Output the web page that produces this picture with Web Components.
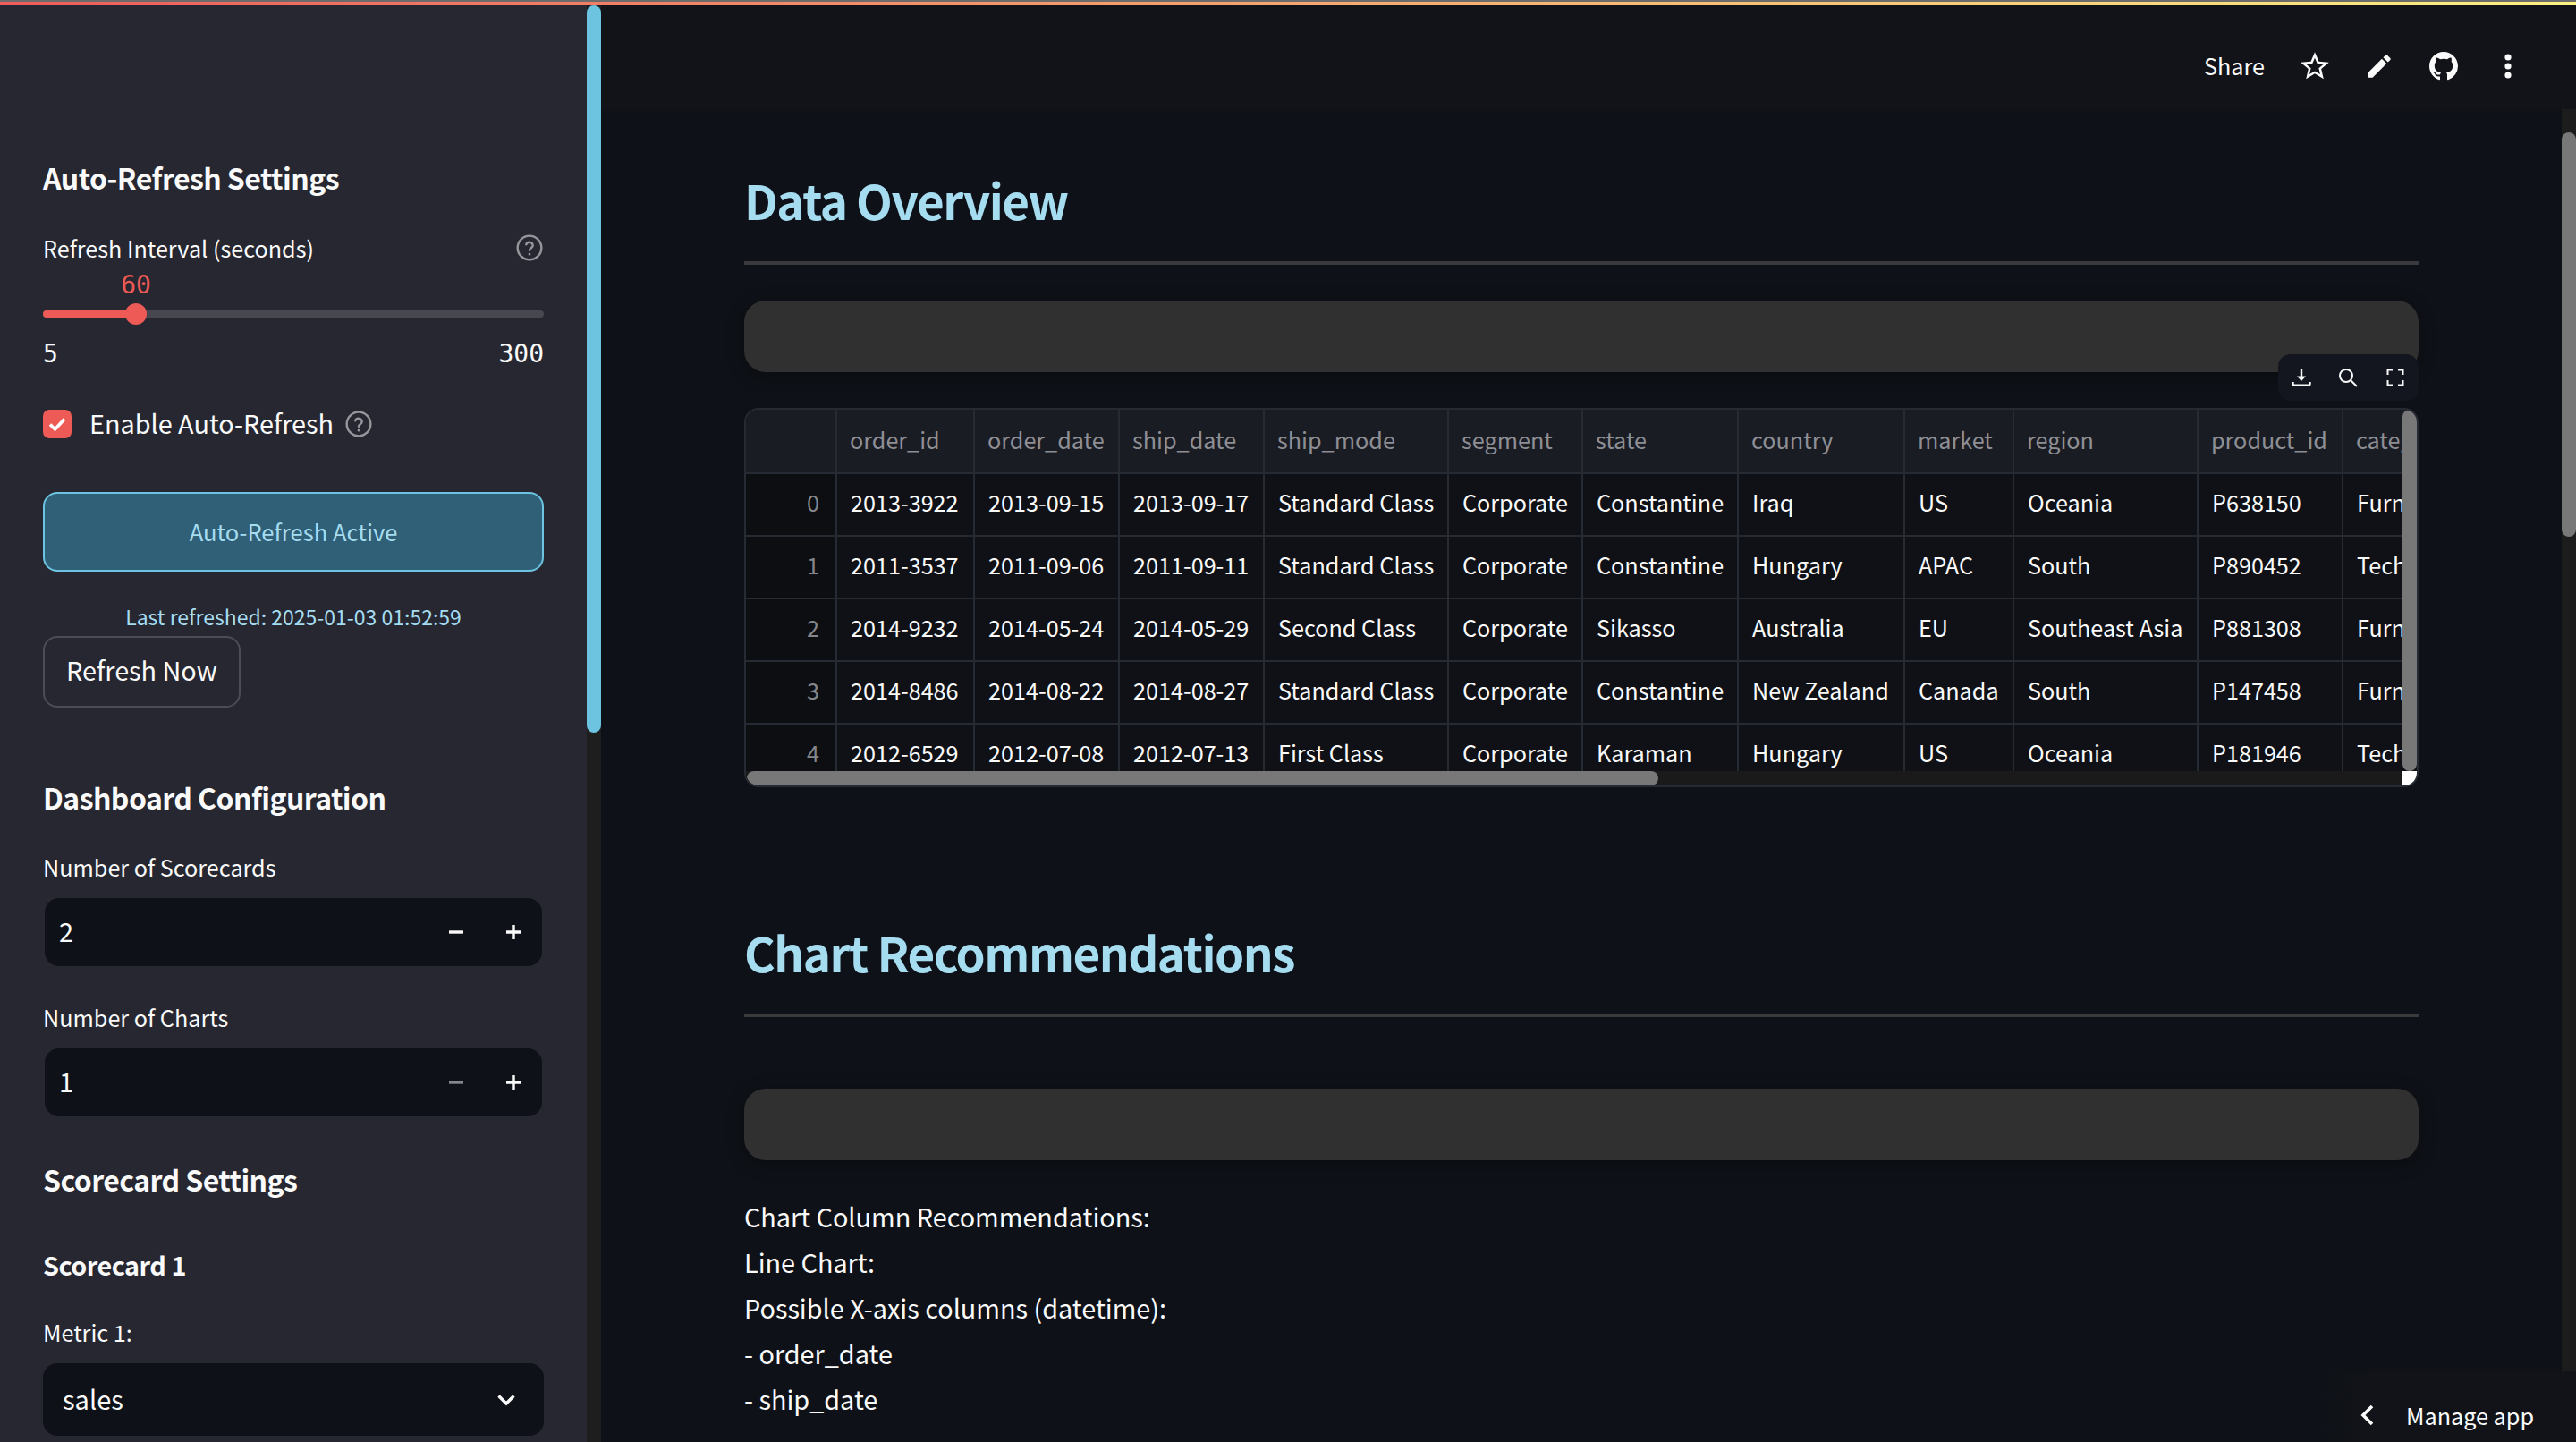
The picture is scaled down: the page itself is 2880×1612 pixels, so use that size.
<!DOCTYPE html>
<html>
<head>
<meta charset="utf-8">
<title>Dashboard</title>
<style>
  html, body { margin: 0; height: 100%; background: #0e1117; }
  body { font-family: "Noto Sans CJK SC", sans-serif; color: #fafafa; overflow: hidden; }
</style>
</head>
<body>
<app-shell>
  <side-bar slot="side">
    <side-heading style="margin-top:167px">Auto-Refresh Settings</side-heading>
    <field-label style="margin-top:34px" help>Refresh Interval (seconds)</field-label>
    <range-slider style="margin-top:-2px" value="60" min="5" max="300"></range-slider>
    <check-row style="margin-top:42px">Enable Auto-Refresh</check-row>
    <status-button style="margin-top:60px">Auto-Refresh Active</status-button>
    <refresh-note style="margin-top:32px">Last refreshed: 2025-01-03 01:52:59</refresh-note>
    <plain-button style="margin-top:4px">Refresh Now</plain-button>
    <side-heading style="margin-top:75px">Dashboard Configuration</side-heading>
    <field-label style="margin-top:33px">Number of Scorecards</field-label>
    <number-input style="margin-top:15px" value="2"></number-input>
    <field-label style="margin-top:37px">Number of Charts</field-label>
    <number-input style="margin-top:15px" value="1" at-min></number-input>
    <side-heading style="margin-top:45px">Scorecard Settings</side-heading>
    <side-subheading style="margin-top:49px">Scorecard 1</side-subheading>
    <field-label style="margin-top:33px">Metric 1:</field-label>
    <select-box style="margin-top:15px">sales</select-box>
  </side-bar>

  <top-header slot="header"></top-header>

  <section-title style="margin-top:61px">Data Overview</section-title>
  <blank-bar style="margin-top:40px"></blank-bar>
  <data-table style="margin-top:40px"></data-table>

  <section-title style="margin-top:144px">Chart Recommendations</section-title>
  <blank-bar style="margin-top:80px"></blank-bar>
  <text-lines style="margin-top:37px">
    <div>Chart Column Recommendations:</div>
    <div>Line Chart:</div>
    <div>Possible X-axis columns (datetime):</div>
    <div>- order_date</div>
    <div>- ship_date</div>
  </text-lines>

  <manage-app slot="overlay"></manage-app>
</app-shell>

<script>
// small helper, every element gets the same open shadow root + template
function define(name, markup, setup) {
  const template = document.createElement('template');
  template.innerHTML = markup;
  customElements.define(name, class extends HTMLElement {
    constructor() {
      super();
      this.attachShadow({ mode: 'open' });
      this.shadowRoot.appendChild(template.content.cloneNode(true));
    }
    connectedCallback() {
      if (setup) setup(this, this.shadowRoot);
    }
  });
}

const helpIcon = `<svg style="display:block" width="32" height="32" viewBox="0 0 24 24" fill="none" stroke="#96979c" stroke-width="1.8" stroke-linecap="round">
  <circle cx="12" cy="12" r="10"/><path d="M9.2 9.2a2.9 2.9 0 0 1 5.6 .9c0 1.9-2.8 2.2-2.8 4"/><path d="M12 17.3v.1" stroke-width="2"/></svg>`;

define('app-shell', `
  <style>
    :host { display: flex; flex-direction: column; height: 100vh; overflow: hidden; position: relative; }
    .bar { flex: none; height: 4px; border-top: 2px solid #6c6c6c; background: linear-gradient(90deg, #ee5c5c, #fdf182); }
    .body { flex: 1; display: flex; min-height: 0; }
    main { flex: 1; min-width: 0; position: relative; display: flex; flex-direction: column; overflow: hidden; }
    .content { flex: 1; min-height: 0; overflow: hidden; padding: 0 176px 0 160px; display: flex; flex-direction: column; }
    .track { position: absolute; right: 0; top: 116px; bottom: 74px; width: 16px; background: #1c1c1c; }
    .thumb { position: absolute; top: 26px; left: 0; width: 16px; height: 452px; background: #787878; border-radius: 8px; }
  </style>
  <div class="bar"></div>
  <div class="body">
    <slot name="side"></slot>
    <main>
      <slot name="header"></slot>
      <div class="content"><slot></slot></div>
      <div class="track"><div class="thumb"></div></div>
      <slot name="overlay"></slot>
    </main>
  </div>
`);

define('side-bar', `
  <style>
    :host { display: block; flex: none; width: 672px; box-sizing: border-box; background: #262730; position: relative; overflow: hidden; }
    .col { display: flex; flex-direction: column; padding: 0 64px 0 48px; }
    .track { position: absolute; top: 0; right: 0; bottom: 0; width: 16px; background: #1e1e1e; }
    .thumb { width: 16px; height: 813px; background: #6cc4e0; border-radius: 8px; }
  </style>
  <div class="col"><slot></slot></div>
  <div class="track"><div class="thumb"></div></div>
`);

define('side-heading', `
  <style>:host { display: block; font-size: 32px; letter-spacing: -.56px; font-weight: 700; line-height: 50px; white-space: nowrap; }</style>
  <slot></slot>
`);

define('side-subheading', `
  <style>:host { display: block; font-size: 28.8px; letter-spacing: -.5px; font-weight: 700; line-height: 44px; white-space: nowrap; }</style>
  <slot></slot>
`);

define('field-label', `
  <style>
    :host { display: flex; justify-content: space-between; align-items: center; font-size: 25.2px; line-height: 40px; height: 40px; white-space: nowrap; }
    .help { display: none; }
    :host([help]) .help { display: block; }
  </style>
  <span><slot></slot></span>
  <span class="help">${helpIcon}</span>
`);

define('range-slider', `
  <style>
    :host { display: block; position: relative; padding-top: 52px; }
    .track { height: 8px; border-radius: 4px; background: #47484f; }
    .fill { height: 8px; border-radius: 4px; background: #ee5a55; }
    .knob { position: absolute; top: 44px; width: 24px; height: 24px; margin-left: -12px; border-radius: 50%; background: #ee5a55; }
    .val { position: absolute; top: 9px; transform: translateX(-50%); font: 28px/30px "DejaVu Sans Mono", monospace; color: #ee5a55; }
    .ends { display: flex; justify-content: space-between; margin-top: 21px; font: 28px/40px "DejaVu Sans Mono", monospace; }
  </style>
  <div class="val"></div>
  <div class="track"><div class="fill"></div></div>
  <div class="knob"></div>
  <div class="ends"><span class="min"></span><span class="max"></span></div>
`, (el, root) => {
  // thumb sits at x=152 for 60 on the 560px track, same pos as the real widget
  const left = '104px';
  root.querySelector('.val').textContent = el.getAttribute('value');
  root.querySelector('.val').style.left = left;
  root.querySelector('.knob').style.left = left;
  root.querySelector('.fill').style.width = left;
  root.querySelector('.min').textContent = el.getAttribute('min');
  root.querySelector('.max').textContent = el.getAttribute('max');
});

define('check-row', `
  <style>
    :host { display: flex; align-items: center; height: 32px; font-size: 28.8px; white-space: nowrap; }
    .box { flex: none; width: 32px; height: 32px; border-radius: 7px; background: #ee5a55; display: flex; align-items: center; justify-content: center; margin-right: 20px; }
    .txt { padding-bottom: 4px; }
    .help { margin-left: 12px; }
  </style>
  <span class="box"><svg width="24" height="24" viewBox="0 0 24 24" fill="none" stroke="#fff" stroke-width="3.6"><path d="M4 12.5l5.5 5.5L20 6.5"/></svg></span>
  <span class="txt"><slot></slot></span>
  <span class="help">${helpIcon}</span>
`);

define('status-button', `
  <style>
    :host { display: flex; align-items: center; justify-content: center; height: 89px; box-sizing: border-box; padding-bottom: 2px; background: #2f6078; border: 2px solid #6cc4e0; border-radius: 16px; color: #a5dcf0; font-size: 25.6px; }
  </style>
  <slot></slot>
`);

define('refresh-note', `
  <style>:host { display: block; text-align: center; color: #a5dcf0; font-size: 23px; line-height: 36px; white-space: nowrap; }</style>
  <slot></slot>
`);

define('plain-button', `
  <style>
    :host { display: flex; align-self: flex-start; align-items: center; height: 80px; box-sizing: border-box; padding: 0 24px 5px; border: 2px solid #4b4c56; border-radius: 16px; font-size: 28.8px; white-space: nowrap; }
  </style>
  <slot></slot>
`);

define('number-input', `
  <style>
    :host { display: flex; align-items: center; height: 76px; margin: 0 2px; background: #0e1117; border-radius: 16px; font-size: 29px; padding-left: 16px; }
    .val { flex: 1; padding-bottom: 4px; }
    .step { display: flex; width: 64px; justify-content: center; }
    :host([at-min]) .minus { stroke: #85868e; }
    svg { stroke: #fafafa; }
  </style>
  <span class="val"></span>
  <span class="step"><svg class="minus" width="18" height="18" viewBox="0 0 18 18" stroke-width="3.4"><path d="M1 9h16"/></svg></span>
  <span class="step"><svg width="18" height="18" viewBox="0 0 18 18" stroke-width="3.4"><path d="M1 9h16M9 1v16"/></svg></span>
`, (el, root) => {
  root.querySelector('.val').textContent = el.getAttribute('value');
});

define('select-box', `
  <style>
    :host { display: flex; align-items: center; justify-content: space-between; height: 81px; background: #0e1117; border-radius: 16px; font-size: 29px; padding: 0 32px 0 22px; }
    span { padding-bottom: 4px; }
  </style>
  <span><slot></slot></span>
  <svg width="20" height="14" viewBox="0 0 20 14" fill="none" stroke="#fafafa" stroke-width="3.4"><path d="M1.5 2.5L10 11l8.5-8.5"/></svg>
`);

define('top-header', `
  <style>
    :host { display: flex; flex: none; align-items: center; justify-content: flex-end; height: 116px; background: #111318; padding: 20px 40px 0 0; box-sizing: border-box; }
    .share { font-size: 25.2px; margin-right: 20px; padding-bottom: 2px; }
    .cell { width: 72px; display: flex; justify-content: center; }
    svg { fill: #fafafa; display: block; }
  </style>
  <span class="share">Share</span>
  <span class="cell"><svg width="38" height="38" viewBox="0 0 24 24"><path d="M22 9.24l-7.19-.62L12 2 9.19 8.63 2 9.24l5.46 4.73L5.82 21 12 17.27 18.18 21l-1.63-7.03L22 9.24zM12 15.4l-3.76 2.27 1-4.28-3.32-2.88 4.38-.38L12 6.1l1.71 4.04 4.38.38-3.32 2.88 1 4.28L12 15.4z"/></svg></span>
  <span class="cell"><svg width="34" height="34" viewBox="0 0 24 24"><path d="M3 17.25V21h3.75L17.81 9.94l-3.75-3.75L3 17.25zM20.71 7.04c.39-.39.39-1.02 0-1.41l-2.34-2.34c-.39-.39-1.02-.39-1.41 0l-1.83 1.83 3.75 3.75 1.83-1.83z"/></svg></span>
  <span class="cell"><svg width="32" height="32" viewBox="0 0 16 16"><path d="M8 0C3.58 0 0 3.58 0 8c0 3.54 2.29 6.53 5.47 7.59.4.07.55-.17.55-.38 0-.19-.01-.82-.01-1.49-2.01.37-2.53-.49-2.69-.94-.09-.23-.48-.94-.82-1.13-.28-.15-.68-.52-.01-.53.63-.01 1.08.58 1.23.82.72 1.21 1.87.87 2.33.66.07-.52.28-.87.51-1.07-1.78-.2-3.64-.89-3.64-3.95 0-.87.31-1.59.82-2.15-.08-.2-.36-1.02.08-2.12 0 0 .67-.21 2.2.82.64-.18 1.32-.27 2-.27.68 0 1.36.09 2 .27 1.53-1.04 2.2-.82 2.2-.82.44 1.1.16 1.92.08 2.12.51.56.82 1.27.82 2.15 0 3.07-1.87 3.75-3.65 3.95.29.25.54.73.54 1.48 0 1.07-.01 1.93-.01 2.2 0 .21.15.46.55.38A8.013 8.013 0 0016 8c0-4.42-3.58-8-8-8z"/></svg></span>
  <span class="cell"><svg width="8" height="28" viewBox="0 0 8 28"><circle cx="4" cy="4" r="3.6"/><circle cx="4" cy="14" r="3.6"/><circle cx="4" cy="24" r="3.6"/></svg></span>
`);

define('section-title', `
  <style>
    :host { display: block; flex: none; }
    h2 { margin: 0; font-size: 53px; letter-spacing: -1.5px; line-height: 80px; font-weight: 700; color: #a5dcf0; white-space: nowrap; }
    .rule { height: 4px; margin-top: 29px; background: #3a3a3d; }
  </style>
  <h2><slot></slot></h2>
  <div class="rule"></div>
`);

define('blank-bar', `
  <style>
    :host { display: block; flex: none; height: 80px; border-radius: 24px; background: #303030; box-shadow: 0 4px 20px rgba(0,0,0,.3); }
  </style>
`);

define('text-lines', `
  <style>:host { display: block; flex: none; font-size: 28.8px; line-height: 51px; white-space: nowrap; }</style>
  <slot></slot>
`);

const columns = ['order_id', 'order_date', 'ship_date', 'ship_mode', 'segment', 'state', 'country', 'market', 'region', 'product_id', 'category'];
const rows = [
  ['2013-3922', '2013-09-15', '2013-09-17', 'Standard Class', 'Corporate', 'Constantine', 'Iraq', 'US', 'Oceania', 'P638150', 'Furniture'],
  ['2011-3537', '2011-09-06', '2011-09-11', 'Standard Class', 'Corporate', 'Constantine', 'Hungary', 'APAC', 'South', 'P890452', 'Technology'],
  ['2014-9232', '2014-05-24', '2014-05-29', 'Second Class', 'Corporate', 'Sikasso', 'Australia', 'EU', 'Southeast Asia', 'P881308', 'Furniture'],
  ['2014-8486', '2014-08-22', '2014-08-27', 'Standard Class', 'Corporate', 'Constantine', 'New Zealand', 'Canada', 'South', 'P147458', 'Furniture'],
  ['2012-6529', '2012-07-08', '2012-07-13', 'First Class', 'Corporate', 'Karaman', 'Hungary', 'US', 'Oceania', 'P181946', 'Technology'],
];

define('data-table', `
  <style>
    :host { display: block; flex: none; position: relative; height: 424px; font-size: 25.2px; }
    .frame { position: relative; height: 100%; box-sizing: border-box; border: 2px solid #262a33; border-radius: 16px; overflow: hidden; }
    .grid { display: grid; grid-template-columns: 102px 154px 162px 162px 206px 150px 174px 186px 122px 206px 162px 200px; grid-auto-rows: 70px; grid-template-rows: 72px; }
    .c { box-sizing: border-box; display: flex; align-items: center; padding: 0 0 6px 15px; border-right: 2px solid #262a33; border-bottom: 2px solid #262a33; white-space: nowrap; overflow: hidden; background: #0f1116; }
    .h { background: #1a1c24; color: #8e8f95; padding: 0 0 4px 14px; }
    .i { justify-content: flex-end; padding: 0 18px 6px 0; color: #85868c; background: #0c0e12; }
    .vbar { position: absolute; right: 0; top: 0; bottom: 16px; width: 16px; background: #787878; border-radius: 8px; }
    .hbar { position: absolute; left: 0; right: 0; bottom: 0; height: 16px; background: #1a1a1a; }
    .hthumb { width: 1019px; height: 16px; margin-left: 1px; background: #787878; border-radius: 8px; }
    .corner { position: absolute; right: 0; bottom: 0; width: 16px; height: 16px; background: #fff; }
  </style>
  <div class="frame">
    <div class="grid"></div>
    <div class="vbar"></div>
    <div class="hbar"><div class="hthumb"></div></div>
    <div class="corner"></div>
  </div>
  <table-toolbar></table-toolbar>
`, (el, root) => {
  const grid = root.querySelector('.grid');
  const add = (text, cls) => {
    const c = document.createElement('div');
    c.className = 'c ' + cls;
    c.textContent = text;
    grid.appendChild(c);
  };
  add('', 'h');
  columns.forEach(name => add(name, 'h'));
  rows.forEach((row, i) => {
    add(String(i), 'i');
    row.forEach(v => add(v, 'd'));
  });
});

define('table-toolbar', `
  <style>
    :host { display: flex; position: absolute; top: -60px; right: 0; height: 52px; width: 157px; background: #13161e; border-radius: 14px; }
    span { flex: 1; display: flex; align-items: center; justify-content: center; }
    svg { fill: none; stroke: #fafafa; stroke-width: 2; }
  </style>
  <span><svg width="24" height="24" viewBox="0 0 24 24"><path d="M12 3v10" stroke-width="2.4"/><path d="M7 10.5h10L12 16z" fill="#fafafa" stroke="none"/><path d="M2.5 17v2a1.6 1.6 0 0 0 1.6 1.6h15.8a1.6 1.6 0 0 0 1.6-1.6v-2" stroke-width="2.4"/></svg></span>
  <span><svg width="24" height="24" viewBox="0 0 24 24"><circle cx="10" cy="10" r="7"/><path d="M15 15l7 7"/></svg></span>
  <span><svg width="24" height="24" viewBox="0 0 24 24"><path d="M3.5 9V3.5H9M15 3.5h5.5V9M20.5 15v5.5H15M9 20.5H3.5V15"/></svg></span>
`);

define('manage-app', `
  <style>
    :host { position: absolute; right: 0; bottom: 0; display: flex; align-items: center; height: 79px; width: 290px; box-sizing: border-box; padding: 19px 0 0 49px; background: linear-gradient(90deg, rgba(17,19,24,0), #111318 22%); font-size: 25.2px; white-space: nowrap; }
    svg { flex: none; margin-right: 36px; }
  </style>
  <svg width="15" height="24" viewBox="0 0 15 24" fill="none" stroke="#fafafa" stroke-width="3.6"><path d="M13 2L3 12l10 10"/></svg>
  <span>Manage app</span>
`);
</script>
</body>
</html>
